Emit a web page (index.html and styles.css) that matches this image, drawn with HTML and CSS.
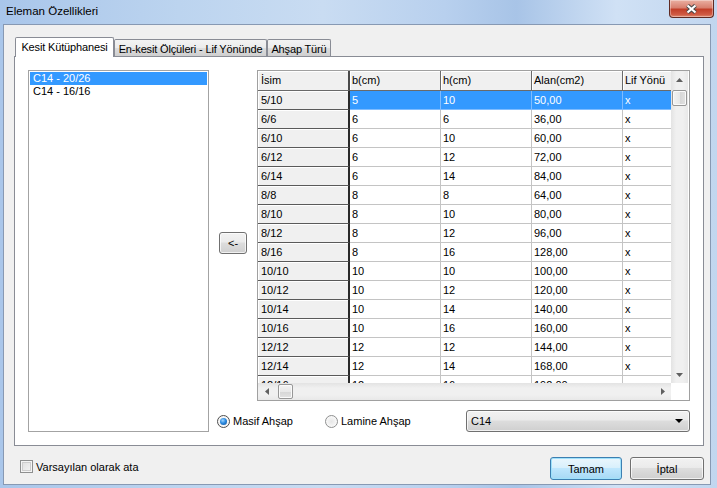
FILE: index.html
```html
<!DOCTYPE html>
<html>
<head>
<meta charset="utf-8">
<title>Eleman Özellikleri</title>
<link rel="stylesheet" href="styles.css">
</head>
<body>
<div class="window">
  <div class="titlebar">
    <span class="title">Eleman Özellikleri</span>
    <div class="close">
      <svg width="13" height="10" viewBox="0 0 13 10"><path d="M2.5 1.5 L10.5 8.5 M10.5 1.5 L2.5 8.5" stroke="#4a4a4a" stroke-width="4.2" fill="none"/><path d="M2.5 1.5 L10.5 8.5 M10.5 1.5 L2.5 8.5" stroke="#ffffff" stroke-width="2.2" fill="none"/></svg>
    </div>
  </div>
  <div class="client">
    <div class="tabs">
      <div class="tab active t1">Kesit Kütüphanesi</div>
      <div class="tab t2">En-kesit Ölçüleri - Lif Yönünde</div>
      <div class="tab t3">Ahşap Türü</div>
    </div>
    <div class="panel">
      <div class="listbox">
        <div class="li sel">C14 - 20/26</div>
        <div class="li">C14 - 16/16</div>
      </div>
      <div class="right">
        <div class="toprow">
          <div class="btncol"><div class="btn small">&lt;-</div></div>
          <div class="grid">
            <div class="gmain">
              <div class="gview">
                <div class="ghead">
                  <div class="c rh">İsim</div><div class="c">b(cm)</div><div class="c">h(cm)</div><div class="c">Alan(cm2)</div><div class="c last">Lif Yönü</div>
                </div>
                <div class="grow sel"><div class="c rh">5/10</div><div class="c">5</div><div class="c">10</div><div class="c">50,00</div><div class="c last">x</div></div>
                <div class="grow"><div class="c rh">6/6</div><div class="c">6</div><div class="c">6</div><div class="c">36,00</div><div class="c last">x</div></div>
                <div class="grow"><div class="c rh">6/10</div><div class="c">6</div><div class="c">10</div><div class="c">60,00</div><div class="c last">x</div></div>
                <div class="grow"><div class="c rh">6/12</div><div class="c">6</div><div class="c">12</div><div class="c">72,00</div><div class="c last">x</div></div>
                <div class="grow"><div class="c rh">6/14</div><div class="c">6</div><div class="c">14</div><div class="c">84,00</div><div class="c last">x</div></div>
                <div class="grow"><div class="c rh">8/8</div><div class="c">8</div><div class="c">8</div><div class="c">64,00</div><div class="c last">x</div></div>
                <div class="grow"><div class="c rh">8/10</div><div class="c">8</div><div class="c">10</div><div class="c">80,00</div><div class="c last">x</div></div>
                <div class="grow"><div class="c rh">8/12</div><div class="c">8</div><div class="c">12</div><div class="c">96,00</div><div class="c last">x</div></div>
                <div class="grow"><div class="c rh">8/16</div><div class="c">8</div><div class="c">16</div><div class="c">128,00</div><div class="c last">x</div></div>
                <div class="grow"><div class="c rh">10/10</div><div class="c">10</div><div class="c">10</div><div class="c">100,00</div><div class="c last">x</div></div>
                <div class="grow"><div class="c rh">10/12</div><div class="c">10</div><div class="c">12</div><div class="c">120,00</div><div class="c last">x</div></div>
                <div class="grow"><div class="c rh">10/14</div><div class="c">10</div><div class="c">14</div><div class="c">140,00</div><div class="c last">x</div></div>
                <div class="grow"><div class="c rh">10/16</div><div class="c">10</div><div class="c">16</div><div class="c">160,00</div><div class="c last">x</div></div>
                <div class="grow"><div class="c rh">12/12</div><div class="c">12</div><div class="c">12</div><div class="c">144,00</div><div class="c last">x</div></div>
                <div class="grow"><div class="c rh">12/14</div><div class="c">12</div><div class="c">14</div><div class="c">168,00</div><div class="c last">x</div></div>
                <div class="grow"><div class="c rh">12/16</div><div class="c">12</div><div class="c">16</div><div class="c">192,00</div><div class="c last">x</div></div>
              </div>
              <div class="vscroll">
                <div class="sbtn"><svg width="7" height="4" viewBox="0 0 7 4"><polygon points="0,4 3.5,0 7,4" fill="#606060"/></svg></div>
                <div class="vtrack"><div class="vthumb"></div></div>
                <div class="sbtn"><svg width="7" height="4" viewBox="0 0 7 4"><polygon points="0,0 7,0 3.5,4" fill="#606060"/></svg></div>
              </div>
            </div>
            <div class="gbottom">
              <div class="hscroll">
                <div class="sbtn"><svg width="4" height="7" viewBox="0 0 4 7"><polygon points="4,0 4,7 0,3.5" fill="#606060"/></svg></div>
                <div class="htrack"><div class="hthumb"></div></div>
                <div class="sbtn"><svg width="4" height="7" viewBox="0 0 4 7"><polygon points="0,0 4,3.5 0,7" fill="#606060"/></svg></div>
              </div>
              <div class="corner"></div>
            </div>
          </div>
        </div>
        <div class="bottomrow">
          <label class="opt o1"><span class="radio on"></span>Masif Ahşap</label>
          <label class="opt"><span class="radio"></span>Lamine Ahşap</label>
          <div class="combo"><span>C14</span><svg width="8" height="4" viewBox="0 0 8 4"><polygon points="0,0 8,0 4,4" fill="#000"/></svg></div>
        </div>
      </div>
    </div>
    <div class="footer">
      <label class="check"><span class="box"></span>Varsayılan olarak ata</label>
      <div class="btn default w72">Tamam</div>
      <div class="btn w74">İptal</div>
    </div>
  </div>
</div>
</body>
</html>
```

FILE: styles.css
```css
* { box-sizing: border-box; }
html, body { margin: 0; padding: 0; }
body {
  width: 717px; height: 488px; overflow: hidden;
  font-family: "Liberation Sans", Arial, sans-serif;
  font-size: 11px; color: #000;
}
.window {
  width: 717px; height: 488px;
  display: flex; flex-direction: column;
  background: linear-gradient(90deg, #a9c6ea 0%, #bcd4ef 25%, #c9dcf2 45%, #b8d0ee 62%, #a8c4e7 72%, #d0e1f5 86%, #c1d6ef 100%);
}
.titlebar {
  height: 24px; flex: none;
  display: flex; justify-content: space-between; align-items: flex-start;
}
.title { font-size: 11.5px; line-height: 23px; padding-left: 6px; color: #000; }
.close {
  width: 45px; height: 18px; margin-right: 3px;
  border: 1px solid #5f2a22; border-top: none; border-radius: 0 0 4px 4px;
  background: linear-gradient(#eab0a2 0%, #d8806f 45%, #c23f29 55%, #cf5a43 85%, #e08a70 100%);
  display: flex; align-items: center; justify-content: center;
  box-shadow: inset 0 0 0 1px rgba(255,255,255,0.35);
}
.client {
  flex: 1;
  margin: 0 6px 3px 3px;
  border: 1px solid #8799b3;
  background: #f0f0f0;
  display: flex; flex-direction: column;
  padding: 12px 6px 0 10px;
}
.tabs { display: flex; align-items: flex-end; height: 19px; flex: none; padding-left: 1px; }
.tab {
  height: 17px;
  border: 1px solid #898c95; border-bottom: none;
  border-radius: 2px 2px 0 0;
  background: linear-gradient(#f3f3f3, #ebebeb 50%, #dddddd 51%, #cfcfcf);
  display: flex; align-items: center; justify-content: center;
  white-space: nowrap;
  letter-spacing: -0.15px;
  padding-top: 1px;
}
.tab.active {
  height: 20px; margin-bottom: -1px;
  background: #fff; position: relative; z-index: 1;
  padding-top: 0; padding-bottom: 1px;
}
.t1 { width: 99px; }
.t2 { width: 153px; }
.t3 { width: 64px; }
.panel {
  width: 690px; height: 390px; flex: none;
  border: 1px solid #898c95;
  background: #fff;
  padding: 13px;
  display: flex; gap: 8px;
}
.listbox {
  width: 181px; height: 362px; flex: none;
  border: 1px solid #a3a3a3;
  padding: 1px;
  background: #fff;
}
.li { height: 13px; line-height: 13px; padding-left: 3px; white-space: nowrap; }
.li.sel { background: #3399ff; color: #fff; }
.right { width: 473px; display: flex; flex-direction: column; }
.toprow { display: flex; height: 331px; }
.btncol { width: 40px; padding-left: 2px; padding-top: 162px; flex: none; }
.btn {
  height: 23px;
  border: 1px solid #707070; border-radius: 3px;
  background: linear-gradient(#f2f2f2, #ebebeb 45%, #dddddd 50%, #cfcfcf);
  display: flex; align-items: center; justify-content: center;
  box-shadow: inset 0 0 0 1px rgba(255,255,255,0.7);
}
.btn.small { width: 28px; height: 22px; }
.grid {
  width: 433px; height: 331px;
  border: 1px solid #a0a0a0;
  background: #fff;
  display: flex; flex-direction: column;
}
.gmain { display: flex; height: 312px; }
.gview { width: 413px; overflow: hidden; }
.ghead, .grow { display: flex; }
.c {
  flex: none; width: 91px; height: 19px; line-height: 18px;
  padding-left: 2px; white-space: nowrap; overflow: hidden;
  border-right: 1px solid #c4c4c4; border-bottom: 1px solid #c4c4c4;
}
.c.last { width: 48px; border-right: none; }
.c.rh {
  width: 92px; padding-left: 3px;
  background: #f0f0f0;
  border-right: 2px solid #2a2a2a;
  border-bottom: 1px solid #5a5a5a;
  box-shadow: inset 1px 1px 0 #ffffff;
}
.ghead .c {
  height: 20px; line-height: 19px;
  background: #f0f0f0;
  border-right: 1px solid #6a6a6a;
  border-bottom: 1px solid #6a6a6a;
  box-shadow: inset 1px 1px 0 #ffffff;
}
.ghead .c.rh { border-right: 2px solid #4a4a4a; }
.ghead .c.last { border-right: none; }
.grow.sel .c:not(.rh) { background: #3399ff; color: #fff; border-right-color: #7fbcff; border-bottom-color: #7fbcff; }
.vscroll {
  width: 17px; display: flex; flex-direction: column;
  background: linear-gradient(90deg, #e3e3e3, #f0f0f0 30%, #f0f0f0 70%, #e8e8e8);
}
.sbtn { width: 17px; height: 17px; flex: none; display: flex; align-items: center; justify-content: center; }
.vtrack { flex: 1; padding: 2px 1px 0 1px; }
.vthumb {
  height: 16px;
  border: 1px solid #979797; border-radius: 2px;
  background: linear-gradient(90deg, #f3f3f3, #e8e8e8 50%, #d6d6d6 51%, #e2e2e2);
  box-shadow: inset 0 0 0 1px #fafafa;
}
.gbottom { display: flex; height: 17px; }
.hscroll {
  width: 413px; display: flex;
  background: linear-gradient(#e3e3e3, #f0f0f0 30%, #f0f0f0 70%, #e8e8e8);
}
.htrack { flex: 1; padding: 1px 0 1px 3px; }
.hthumb {
  width: 15px; height: 15px;
  border: 1px solid #979797; border-radius: 2px;
  background: linear-gradient(#f3f3f3, #e8e8e8 50%, #d6d6d6 51%, #e2e2e2);
  box-shadow: inset 0 0 0 1px #fafafa;
}
.corner { flex: 1; background: #fff; }
.bottomrow { display: flex; align-items: center; height: 22px; margin-top: 9px; }
.opt { display: flex; align-items: center; white-space: nowrap; }
.o1 { width: 108px; }
.radio {
  width: 13px; height: 13px; border-radius: 50%; flex: none;
  border: 1px solid #8e8f8f;
  background: radial-gradient(circle at 50% 50%, #e6e6e6 0, #f6f6f6 60%, #ffffff 100%);
  margin-right: 3px;
  display: flex; align-items: center; justify-content: center;
}
.radio.on { border-color: #4d4d4d; }
.radio.on::after {
  content: ""; width: 7px; height: 7px; border-radius: 50%;
  background: radial-gradient(circle at 40% 35%, #9fd5ff 0, #2b8ae0 45%, #0d4e96 100%);
}
.combo {
  margin-left: auto; width: 224px; height: 22px;
  border: 1px solid #707070; border-radius: 3px;
  background: linear-gradient(#f2f2f2, #ebebeb 45%, #dddddd 50%, #cfcfcf);
  box-shadow: inset 0 0 0 1px rgba(255,255,255,0.7);
  display: flex; align-items: center; justify-content: space-between;
  padding: 0 6px 0 4px;
}
.footer {
  flex: 1; display: flex; align-items: flex-start;
  padding-top: 11px; gap: 8px;
}
.check { display: flex; align-items: center; margin-right: auto; margin-left: 6px; padding-top: 3px; white-space: nowrap; }
.box {
  width: 13px; height: 13px; flex: none;
  border: 1px solid #8e8f8f;
  background: linear-gradient(135deg, #dcdcdc, #f6f6f6);
  box-shadow: inset 0 0 0 1px #f4f4f4, inset 0 0 0 2px #cdcdcd;
  margin-right: 3px;
}
.w72 { width: 72px; }
.w74 { width: 74px; }
.btn.default {
  border-color: #3c7fb1;
  background: linear-gradient(#eaf6fd, #d9f0fc 45%, #bee6fd 50%, #a7d9f5);
  box-shadow: inset 0 0 0 1px #9fe1fb;
}
```
